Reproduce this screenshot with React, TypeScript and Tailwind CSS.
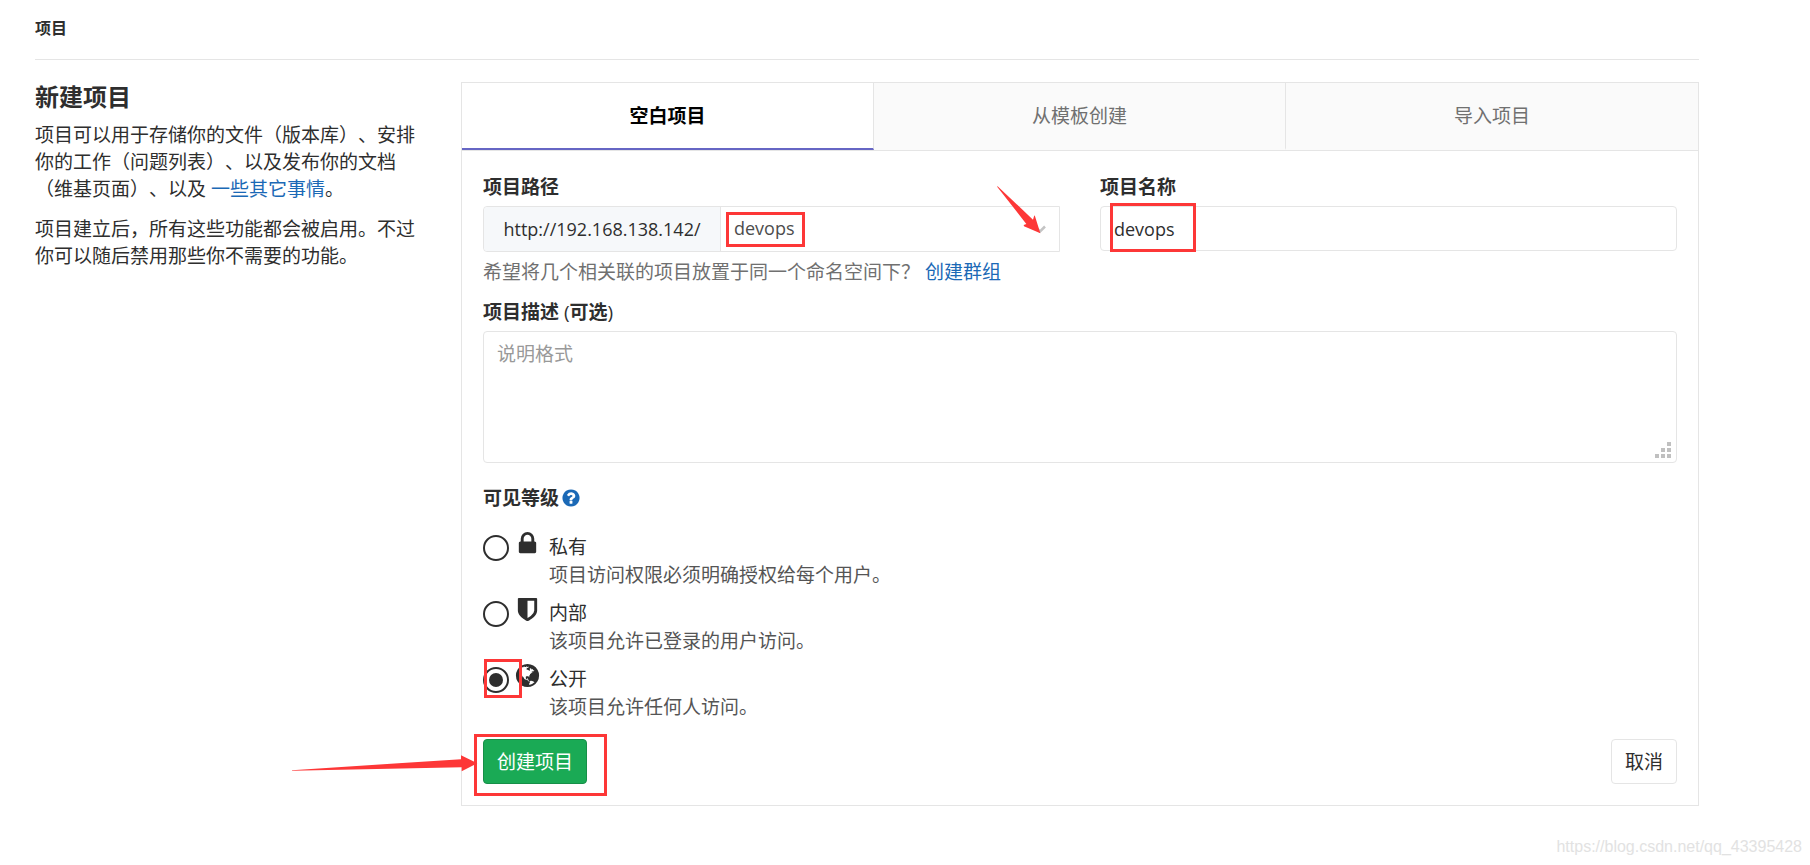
import type { ReactNode } from 'react';

const ICONS = {
  lock: 'M640 768h512v-192q0-106-75-181t-181-75-181 75-75 181v192zm832 96v576q0 40-28 68t-68 28h-960q-40 0-68-28t-28-68v-576q0-40 28-68t68-28h32v-192q0-184 132-316t316-132 316 132 132 316v192h32q40 0 68 28t28 68z',
  shield:
    'M1344 960v-640h-448v1137q119-63 213-137 235-184 235-360zm192-768v768q0 86-33.5 170.5t-83 150-118 127.5-126.5 103-121 77.5-89.5 49.5-42.5 20q-12 6-26 6t-26-6q-16-7-42.5-20t-89.5-49.5-121-77.5-126.5-103-118-127.5-83-150-33.5-170.5v-768q0-26 19-45t45-19h1152q26 0 45 19t19 45z',
  globe:
    'M896 128q209 0 385.5 103t279.5 279.5 103 385.5-103 385.5-279.5 279.5-385.5 103-385.5-103-279.5-279.5-103-385.5 103-385.5 279.5-279.5 385.5-103zm274 521q-2 1-9.5 9.5t-13.5 9.5q2 0 4.5-5t5-11 3.5-7q6-7 22-15 14-6 52-12 34-8 51 11-2-2 9.5-13t14.5-12q3-2 15-4.5t15-7.5l2-22q-12 1-17.5-7t-6.5-21q0 2-6 8 0-7-4.5-8t-11.5 1-9 1q-10-3-15-7.5t-8-16.5-4-15q-2-5-9.5-11t-9.5-10q-1-2-2.5-5.5t-3-6.5-4-5.5-5.5-2.5-7 5-7.5 10-4.5 5q-3-2-6-1.5t-4.5 1-4.5 3-5 3.5q-3 2-8.5 3t-8.5 2q15-5-1-11-10-4-16-3 9-4 7.5-12t-8.5-14h5q-1-4-8.5-8.5t-17.5-8.5-13-6q-8-5-34-9.5t-33-.5q-5 6-4.5 10.5t4 14 3.5 12.5q1 6-5.5 13t-6.5 12q0 7 14 15.5t10 21.5q-3 8-16 16t-16 12q-5 8-1.5 18.5t10.5 16.5q2 2 1.5 4t-3.5 4.5-5.5 4-6.5 3.5l-3 2q-11 5-20.5-6t-13.5-26q-7-25-16-30-23-8-29 1-5-13-41-26-25-9-58-4 6-1 0-15-7-15-19-12 3-6 4-17.5t1-13.5q3-13 12-23 1-1 7-8.5t9.5-13.5.5-6q35 4 50-11 5-5 11.5-17t10.5-17q9-6 14-5.5t14.5 5.5 14.5 5q14 1 15.5-11t-7.5-20q12 1 3-17-4-7-8-9-12-4-27 5-8 4 2 8-1-1-9.5 10.5t-16.5 17.5-16-5q-1-1-5.5-13.5t-9.5-13.5q-8 0-16 15 3-8-11-15t-24-8q19-12-8-27-7-4-20.5-5t-19.5 4q-5 7-5.5 11.5t5 8 10.5 5.5 11.5 4 8.5 3q14 10 8 14-2 1-8.5 3.5t-11.5 4.5-6 4q-3 4 0 14t-2 14q-5-5-9-17.5t-7-16.5q7 9-25 6l-10-1q-4 0-16 2t-20.5 1-13.5-8q-4-8 0-20 1-4 4-2-4-3-11-9.5t-10-8.5q-46 15-94 41 6 1 12-1 5-2 13-6.5t10-5.5q34-14 42-7l5-5q14 16 20 25-7-4-30-1-20 6-22 12 7 12 5 18-4-3-11.5-10t-14.5-11-15-5q-16 0-22 1-146 80-235 222 7 7 12 8 4 1 5 9t2.5 11 11.5-3q9 8 3 19 1-1 44 27 19 17 21 21 3 11-10 18-1-2-9-9t-9-4q-3 5 .5 18.5t10.5 12.5q-7 0-9.5 16t-2.5 35.5-1 23.5l2 1q-3 12 5.5 34.5t21.5 19.5q-13 3 20 43 6 8 8 9 3 2 12 7.5t15 10 10 10.5q4 5 10 22.5t14 23.5q-2 6 9.5 20t10.5 23q-1 0-2.5 1t-2.5 1q3 7 15.5 14t15.5 13q1 3 2 10t3 11 8 2q2-20-24-62-15-25-17-29-3-5-5.5-15.5t-4.5-14.5q2 0 6 1.5t8.5 3.5 7.5 4 2 3q-3 7 2 17.5t12 18.5 17 19 12 13q6 6 14 19.5t0 13.5q9 0 20 10.5t17 19.5q5 8 8 26t5 24q2 7 8.5 13.5t12.5 9.5l16 8 13 7q5 2 18.5 10.5t21.5 11.5q10 4 16 4t14.5-2.5 13.5-3.5q15-2 29 15t21 21q36 19 55 11-2 1 .5 7.5t8 15.5 9 14.5 5.5 8.5q5 6 18 15t18 15q6-4 7-9-3 8 7 20t18 10q14-3 14-32-31 15-49-18 0-1-2.5-5.5t-4-8.5-2.5-8.5 0-7.5 5-3q9 0 10-3.5t-2-12.5-4-13q-1-8-11-20t-12-15q-5 9-16 8t-16-9q0 1-1.5 5.5t-1.5 6.5q-13 0-15-1 1-3 2.5-17.5t3.5-22.5q1-4 5.5-12t7.5-14.5 4-12.5-4.5-9.5-17.5-2.5q-19 1-26 20-1 3-3 10.5t-5 11.5-9 7q-7 3-24 2t-24-5q-13-8-22.5-29t-9.5-37q0-10 2.5-26.5t3-25-5.5-24.5q3-2 9-9.5t10-10.5q2-1 4.5-1.5t4.5 0 4-1.5 3-6q-1-1-4-3-3-3-4-3 7 3 28.5-1.5t27.5 1.5q15 11 22-2 0-1-2.5-9.5t-.5-13.5q5 27 29 9 3 3 15.5 5t17.5 5q3 2 7 5.5t5.5 4.5 5-.5 8.5-6.5q10 14 12 24 11 40 19 44 7 3 11 2t4.5-9.5 0-14-1.5-12.5l-1-8v-18l-1-8q-15-3-18.5-12t1.5-18.5 15-18.5q1-1 8-3.5t15.5-6.5 12.5-8q21-19 15-35 7 0 11-9-1 0-5-3t-7.5-5-4.5-2q9-5 2-16 5-3 7.5-11t7.5-10q9 12 21 2 8-8 1-16 5-7 20.5-10.5t18.5-9.5q7 2 8-2t1-12 3-12q4-5 15-9t13-5l17-11q3-4 0-4 18 2 31-11 10-11-6-20 3-6-3-9.5t-15-5.5q3-1 11.5-.5t10.5-1.5q15-10-7-16-17-5-43 12zm-163 877q206-36 351-189-3-3-12.5-4.5t-12.5-3.5q-18-7-24-8 1-7-2.5-13t-8-9-12.5-8-11-7q-2-2-7-6t-7-5.5-7.5-4.5-8.5-2-10 1l-3 1q-3 1-5.5 2.5t-5.5 3-4 3 0 2.5q-21-17-36-22-5-1-11-5.5t-10.5-7-10-1.5-11.5 7q-5 5-6 15t-2 13q-7-5 0-17.5t2-18.5q-3-6-10.5-4.5t-12 4.5-11.5 8.5-9 6.5-8.5 5.5-8.5 7.5q-3 4-6 12t-5 11q-2-4-11.5-6.5t-9.5-5.5q2 10 4 35t5 38q7 31-12 48-27 25-29 40-4 22 12 26 0 7-8 20.5t-7 21.5q0 6 2 16z',
  question:
    'M1024 1376v-192q0-14-9-23t-23-9h-192q-14 0-23 9t-9 23v192q0 14 9 23t23 9h192q14 0 23-9t9-23zm256-672q0-88-55.5-163t-138.5-116-170-41q-243 0-371 213-15 24 8 42l132 100q7 6 19 6 16 0 25-12 53-68 86-92 34-24 86-24 48 0 85.5 26t37.5 59q0 38-20 61t-68 45q-63 28-115.5 86.5t-52.5 125.5v36q0 14 9 23t23 9h192q14 0 23-9t9-23q0-19 21.5-49.5t54.5-49.5q32-18 49-28.5t46-35 44.5-48 28-60.5 12.5-81zm384 192q0 209-103 385.5t-279.5 279.5-385.5 103-385.5-103-279.5-279.5-103-385.5 103-385.5 279.5-279.5 385.5-103 385.5 103 279.5 279.5 103 385.5z',
};

function Icon({ name, className }: { name: keyof typeof ICONS; className: string }) {
  return (
    <svg viewBox="0 0 1792 1792" fill="currentColor" aria-hidden="true" className={className}>
      <path d={ICONS[name]} />
    </svg>
  );
}

/* Red highlight frame laid over a control */
function Highlight({ className }: { className: string }) {
  return <span aria-hidden="true" className={`pointer-events-none absolute border-3 border-[#fd3737] ${className}`} />;
}

function Tab({ active, children }: { active?: boolean; children: ReactNode }) {
  return (
    <button
      type="button"
      role="tab"
      aria-selected={!!active}
      className={`h-[67px] border-b-2 ${
        active ? 'border-b-[#6666c4] bg-white font-bold text-black' : 'border-b-transparent bg-[#fafafa] text-[#707070]'
      }`}
    >
      {children}
    </button>
  );
}

type Level = { id: string; icon: keyof typeof ICONS; title: string; text: string };

const LEVELS: Level[] = [
  { id: 'private', icon: 'lock', title: '私有', text: '项目访问权限必须明确授权给每个用户。' },
  { id: 'internal', icon: 'shield', title: '内部', text: '该项目允许已登录的用户访问。' },
  { id: 'public', icon: 'globe', title: '公开', text: '该项目允许任何人访问。' },
];

function LevelOption({ level, checked }: { level: Level; checked: boolean }) {
  return (
    <div className="relative flex">
      <input
        type="radio"
        id={level.id}
        name="visibility"
        defaultChecked={checked}
        className="mt-[2px] grid size-[26px] shrink-0 appearance-none place-content-center rounded-full border-2 border-[#2e2e2e] bg-white before:size-[14px] before:rounded-full before:bg-transparent checked:before:bg-[#2e2e2e]"
      />
      <label htmlFor={level.id} className="flex">
        <Icon name={level.icon} className="-mt-[3px] mr-[8px] ml-[5px] size-[27px] shrink-0" />
        <span className="flex flex-col">
          <span>{level.title}</span>
          <span className="text-[#555555]">{level.text}</span>
        </span>
      </label>
      {checked && <Highlight className="-top-[6px] left-px h-[39px] w-[38px]" />}
    </div>
  );
}

export default function App() {
  return (
    <div
      lang="zh-CN"
      className="relative min-h-screen bg-white pr-[111px] pl-[35px] font-['Open_Sans','Noto_Sans_CJK_SC',sans-serif] text-[19px] leading-[28px] text-[#2e2e2e] [text-spacing-trim:space-all]"
    >
      <header className="flex h-[60px] items-center border-b border-[#e5e5e5] pb-1 text-base font-bold">项目</header>

      <main className="grid grid-cols-[394px_minmax(0,1fr)] gap-8 pt-[22px]">
        <section className="leading-[27px]">
          <h1 className="text-2xl leading-[30px] font-bold">新建项目</h1>
          <p className="mt-[10px]">
            项目可以用于存储你的文件（版本库）、安排你的工作（问题列表）、以及发布你的文档（维基页面）、以及{' '}
            <a href="#features" className="text-[#1b69b6]">
              一些其它事情
            </a>
            。
          </p>
          <p className="mt-[13px]">项目建立后，所有这些功能都会被启用。不过你可以随后禁用那些你不需要的功能。</p>
        </section>

        <section className="border border-[#e5e5e5]">
          <div role="tablist" className="grid grid-cols-3 divide-x divide-[#e5e5e5] border-b border-[#e5e5e5]">
            <Tab active>空白项目</Tab>
            <Tab>从模板创建</Tab>
            <Tab>导入项目</Tab>
          </div>

          <form className="flex flex-col px-[21px] pt-[22px] pb-[21px]" onSubmit={(e) => e.preventDefault()}>
            <div className="grid grid-cols-2 gap-10">
              <div>
                <label htmlFor="path" className="block font-bold">
                  项目路径
                </label>
                <div className="relative mt-[5px] flex h-[46px] rounded-l border border-[#e5e5e5] text-lg">
                  <span className="flex w-[237px] shrink-0 items-center justify-center rounded-l border-r border-[#e5e5e5] bg-[#f6f8fa]">
                    http://192.168.138.142/
                  </span>
                  <select id="path" className="min-w-0 flex-1 appearance-none bg-white pb-[2px] pl-[13px] text-[#4d4d4d]">
                    <option>devops</option>
                  </select>
                  <svg
                    viewBox="0 0 12 8"
                    aria-hidden="true"
                    className="pointer-events-none absolute top-[18px] right-[13px] h-[8px] w-[12px] fill-none stroke-[#c4c4c4] stroke-[2.5]"
                  >
                    <path d="M1 1.5 6 6.5 11 1.5" />
                  </svg>
                  <Highlight className="top-[5px] left-[242px] h-[35px] w-[79px]" />
                  <svg
                    viewBox="0 0 132 144"
                    aria-hidden="true"
                    className="pointer-events-none absolute -top-[21px] right-[18px] h-[48px] w-[44px] fill-[#fd3737]"
                  >
                    <path d="M1 0 108 101 112 88 114 91 130 142 81 121 80 117 88 114 1 3Z" />
                  </svg>
                </div>
                <p className="mt-[6px] text-[#707070]">
                  希望将几个相关联的项目放置于同一个命名空间下？{' '}
                  <a href="#group" className="text-[#1b69b6]">
                    创建群组
                  </a>
                </p>
              </div>
              <div>
                <label htmlFor="name" className="block font-bold">
                  项目名称
                </label>
                <div className="relative mt-[5px] flex">
                  <input
                    id="name"
                    type="text"
                    defaultValue="devops"
                    className="h-[45px] w-full rounded border border-[#e5e5e5] px-[13px] text-lg"
                  />
                  <Highlight className="-top-[3px] left-[10px] h-[49px] w-[86px]" />
                </div>
              </div>
            </div>

            <label htmlFor="description" className="mt-3 font-bold">
              项目描述 <span className="font-normal">(</span>可选<span className="font-normal">)</span>
            </label>
            <div className="relative mt-[5px] flex">
              <textarea
                id="description"
                placeholder="说明格式"
                className="h-[132px] w-full resize-none rounded border border-[#e5e5e5] px-[13px] py-[8px] placeholder:text-[#999999]"
              />
              <svg
                viewBox="0 0 16 16"
                aria-hidden="true"
                className="pointer-events-none absolute right-[6px] bottom-[5px] size-4 fill-[#c0c0c0]"
              >
                <path d="M12 0h4v4h-4zM6 6h4v4H6zM12 6h4v4h-4zM0 12h4v4H0zM6 12h4v4H6zM12 12h4v4h-4z" />
              </svg>
            </div>

            <fieldset className="mt-[21px]">
              <legend className="flex items-center font-bold">
                可见等级
                <a href="#help" aria-label="帮助" className="ml-[2px] text-[#1b69b6]">
                  <Icon name="question" className="size-5" />
                </a>
              </legend>
              <div className="mt-[21px] flex flex-col gap-[10px]">
                {LEVELS.map((level) => (
                  <LevelOption key={level.id} level={level} checked={level.id === 'public'} />
                ))}
              </div>
            </fieldset>

            <div className="mt-[18px] flex justify-between">
              <div className="relative">
                <button
                  type="submit"
                  className="h-[45px] rounded border border-[#168f48] bg-[#1aaa55] px-[13px] text-white"
                >
                  创建项目
                </button>
                <Highlight className="-top-[5px] -left-[9px] h-[62px] w-[133px]" />
                <svg
                  viewBox="0 0 558 50"
                  aria-hidden="true"
                  className="pointer-events-none absolute top-[16px] -left-[191px] h-[17px] w-[186px] fill-[#fd3737]"
                >
                  <path d="M0 45 507 12V0L556 24 509 48V36L0 47Z" />
                </svg>
              </div>
              <button type="button" className="h-[45px] rounded border border-[#e5e5e5] bg-white px-[13px]">
                取消
              </button>
            </div>
          </form>
        </section>
      </main>

      <footer className="absolute right-2 bottom-[6px] font-['Liberation_Sans',sans-serif] text-base leading-6 text-[#e2e2e2]">
        https://blog.csdn.net/qq_43395428
      </footer>
    </div>
  );
}
